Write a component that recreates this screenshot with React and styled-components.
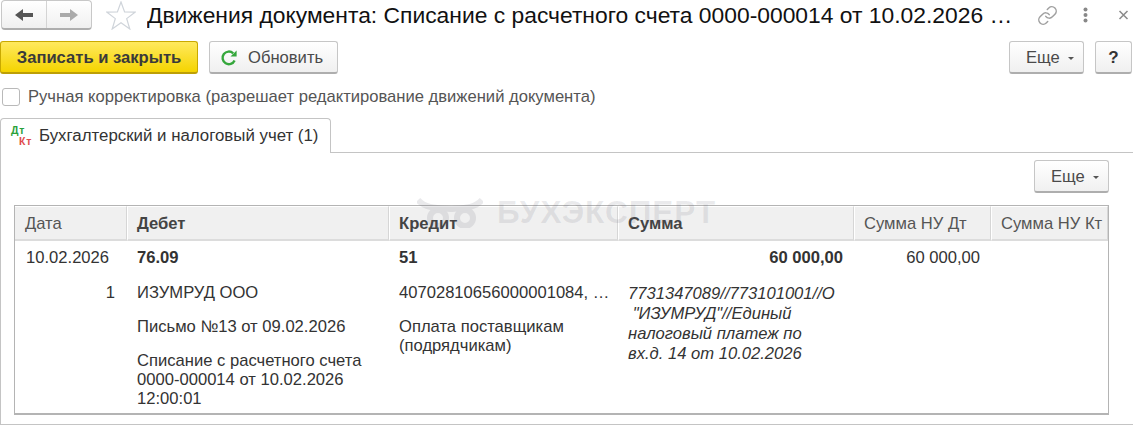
import React from "react";
import styled, { createGlobalStyle } from "styled-components";

const GlobalStyle = createGlobalStyle`
  html, body {
    margin: 0;
    padding: 0;
    background: #fff;
    overflow: hidden;
  }
  body {
    font-family: "Liberation Sans", Arial, sans-serif;
    font-size: 16.6px;
    color: #333;
  }
`;

const Page = styled.div`
  width: 1133px;
  height: 425px;
  position: relative;
  overflow: hidden;
`;

const Header = styled.div`
  display: flex;
  align-items: center;
  height: 30px;
  padding-left: 1px;
`;

const NavGroup = styled.div`
  display: flex;
  width: 91px;
  height: 30px;
  box-sizing: border-box;
  border: 1px solid #c8c8c8;
  border-bottom: 2px solid #aeaeae;
  border-radius: 4px;
  background: linear-gradient(#fff, #f0f0f0);
`;

const NavButton = styled.div`
  flex: 1;
  display: flex;
  align-items: center;
  justify-content: center;
  & + & {
    border-left: 1px solid #d4d4d4;
  }
`;

const StarWrap = styled.div`
  display: flex;
  margin-left: 14px;
`;

const Title = styled.div`
  flex: 1;
  margin-left: 11px;
  font-size: 22.85px;
  color: #111;
  white-space: nowrap;
  overflow: hidden;
`;

const HeaderIcons = styled.div`
  display: flex;
  align-items: center;
  gap: 25px;
  margin-right: 4px;
`;

const Toolbar = styled.div`
  display: flex;
  gap: 11px;
  margin-top: 11px;
`;

const Button = styled.div`
  display: flex;
  align-items: center;
  justify-content: center;
  gap: 8px;
  box-sizing: border-box;
  width: ${(p) => p.$width}px;
  height: 33px;
  padding-top: 2px;
  border-radius: 3px;
  color: #4a4a4a;
  border: 1px solid #c6c6c6;
  border-bottom: 2px solid #aeaeae;
  background: linear-gradient(#fff, #f0f0f0);
`;

const PrimaryButton = styled(Button)`
  font-weight: bold;
  color: #3a3a3a;
  border: 1px solid #c9a900;
  border-bottom: 2px solid #bd9f06;
  background: linear-gradient(#ffe95e, #f5d400);
`;

const RefreshButton = styled(Button)`
  justify-content: flex-start;
  gap: 10px;
  padding-left: 10px;
`;

const MenuButton = styled(Button)`
  justify-content: flex-start;
  padding-left: 16px;
`;

const HelpButton = styled(Button)`
  font-size: 17px;
  font-weight: bold;
  color: #333;
`;

const Spacer = styled.div`
  flex: 1;
`;

const ToolbarEnd = styled.div`
  display: flex;
  gap: 11px;
  margin-right: 1px;
`;

const Caret = styled.span`
  width: 0;
  height: 0;
  border-left: 3px solid transparent;
  border-right: 3px solid transparent;
  border-top: 3px solid #555;
`;

const CheckRow = styled.div`
  display: flex;
  align-items: center;
  gap: 8px;
  margin-top: 14px;
  padding-left: 2px;
  height: 18px;
  color: #555;
`;

const CheckBox = styled.span`
  box-sizing: border-box;
  width: 18px;
  height: 18px;
  background: #fff;
  border: 1px solid #b9b9b9;
  border-radius: 3px;
`;

const Tabs = styled.div`
  display: flex;
  margin-top: 12px;
  height: 34px;
`;

const Tab = styled.div`
  display: flex;
  align-items: center;
  gap: 7px;
  box-sizing: border-box;
  width: 331px;
  height: 35px;
  padding-left: 10px;
  font-size: 16.85px;
  background: #fff;
  border: 1px solid #c4c4c4;
  border-bottom: none;
  border-radius: 4px 4px 0 0;
  position: relative;
  z-index: 1;
  color: #333;
`;

const DtKt = styled.span`
  display: flex;
  flex-direction: column;
  width: 21px;
  font-size: 10.5px;
  font-weight: bold;
  letter-spacing: 0.7px;
  line-height: 11px;
  color: #2aa13a;
`;

const Kt = styled.span`
  align-self: flex-end;
  color: #e04b4b;
`;

const Panel = styled.div`
  box-sizing: border-box;
  width: 1140px;
  height: 273px;
  padding: 7px 30px 0 13px;
  border: 1px solid #c4c4c4;
`;

const PanelBar = styled.div`
  display: flex;
  justify-content: flex-end;
  height: 33px;
`;

const Table = styled.div`
  display: grid;
  grid-template-columns: 112px 262px 229px 236px 137px 1fr;
  grid-template-rows: 35px 1fr;
  box-sizing: border-box;
  height: 210px;
  margin-top: 12px;
  border: 1px solid #b4b4b4;
  border-bottom-width: 2px;
  overflow: hidden;
`;

const HeadCell = styled.div`
  box-sizing: border-box;
  height: 35px;
  padding: 7px 0 0 ${(p) => (p.$first ? 10 : 9)}px;
  background: #f0f0f0;
  border-left: ${(p) => (p.$first ? "none" : "1px solid #fff")};
  border-right: 1px solid #d6d6d6;
  border-top: 1px solid #fff;
  border-bottom: 2px solid #dcdcdc;
  font-weight: ${(p) => (p.$bold ? "bold" : "normal")};
  color: ${(p) => (p.$bold ? "#444" : "#555")};
  white-space: nowrap;
  overflow: hidden;
`;

const Cell = styled.div`
  padding: 7px 11px 0 10px;
  line-height: 19px;
  color: #333;
`;

const DateCell = styled(Cell)`
  padding: 7px 12px 0 11px;
`;

const Line = styled.div`
  min-height: 19px;
  font-weight: ${(p) => (p.$bold ? "bold" : "normal")};
  text-align: ${(p) => (p.$right ? "right" : "left")};
  margin-top: ${(p) => p.$top || 0}px;
  white-space: ${(p) => (p.$nowrap ? "nowrap" : "normal")};
`;

const Comment = styled.div`
  font-style: italic;
  line-height: 20px;
  margin-top: 17px;
  white-space: pre-wrap;
  color: #333;
`;

const Watermark = styled.div`
  position: absolute;
  left: 417px;
  top: 194px;
  display: flex;
  align-items: center;
  gap: 14px;
  font-size: 31.5px;
  font-weight: bold;
  letter-spacing: 1px;
  color: rgba(90, 90, 110, 0.13);
  pointer-events: none;
`;

const ArrowIcon = ({ color, flip }) => (
  <svg width="18" height="12" viewBox="0 0 18 12" style={flip ? { transform: "scaleX(-1)" } : undefined}>
    <path d="M0 6 L8 0 V4 H18 V8 H8 V12 Z" fill={color} />
  </svg>
);

const StarIcon = () => (
  <svg width="30" height="29" viewBox="0 0 30 29">
    <path
      d="M15 1 L18.6 11 L29 11.2 L20.7 17.6 L23.8 28 L15 21.8 L6.2 28 L9.3 17.6 L1 11.2 L11.4 11 Z"
      fill="#fff"
      stroke="#cfd4da"
      strokeWidth="1.2"
    />
  </svg>
);

const LinkIcon = () => (
  <svg width="21" height="21" viewBox="0 0 24 24" fill="none" stroke="#a0a0a0" strokeWidth="1.7" strokeLinecap="round">
    <path d="M10 13a5 5 0 0 0 7.54.54l3-3a5 5 0 0 0-7.07-7.07l-1.72 1.71" />
    <path d="M14 11a5 5 0 0 0-7.54-.54l-3 3a5 5 0 0 0 7.07 7.07l1.71-1.71" />
  </svg>
);

const DotsIcon = () => (
  <svg width="5" height="16" viewBox="0 0 5 16">
    <circle cx="2.5" cy="2.5" r="2" fill="#888" />
    <circle cx="2.5" cy="8" r="2" fill="#888" />
    <circle cx="2.5" cy="13.5" r="2" fill="#888" />
  </svg>
);

const CloseIcon = () => (
  <svg width="16" height="10" viewBox="0 0 16 10" stroke="#8a8a8a" strokeWidth="1.5">
    <path d="M6.5 1 L14.5 9 M14.5 1 L6.5 9" />
  </svg>
);

const RefreshIcon = () => (
  <svg width="18" height="18" viewBox="0 0 18 18" fill="none">
    <path d="M14.6 11.5A6.3 6.3 0 1 1 13.2 4.3" stroke="#35a73c" strokeWidth="2.4" />
    <path d="M10.5 7.5 H16.6 V1.4 Z" fill="#35a73c" />
  </svg>
);

const LogoIcon = () => (
  <svg width="66" height="30" viewBox="0 0 66 30" fill="none" stroke="#5a5a6e" strokeWidth="6" opacity="0.13">
    <circle cx="21" cy="20" r="8" />
    <circle cx="48" cy="20" r="8" />
    <path d="M1 2 C8 10 18 10 34 11 C48 10 58 10 65 2" />
  </svg>
);

const MoreButton = () => (
  <MenuButton $width={75}>
    Еще <Caret />
  </MenuButton>
);

const columns = [
  { title: "Дата" },
  { title: "Дебет", bold: true },
  { title: "Кредит", bold: true },
  { title: "Сумма", bold: true },
  { title: "Сумма НУ Дт" },
  { title: "Сумма НУ Кт" },
];

export default function App() {
  return (
    <Page>
      <GlobalStyle />
      <Header>
        <NavGroup>
          <NavButton>
            <ArrowIcon color="#555" />
          </NavButton>
          <NavButton>
            <ArrowIcon color="#aaa" flip />
          </NavButton>
        </NavGroup>
        <StarWrap>
          <StarIcon />
        </StarWrap>
        <Title>Движения документа: Списание с расчетного счета 0000-000014 от 10.02.2026 …</Title>
        <HeaderIcons>
          <LinkIcon />
          <DotsIcon />
          <CloseIcon />
        </HeaderIcons>
      </Header>

      <Toolbar>
        <PrimaryButton $width={198}>Записать и закрыть</PrimaryButton>
        <RefreshButton $width={129}>
          <RefreshIcon />
          Обновить
        </RefreshButton>
        <Spacer />
        <ToolbarEnd>
          <MoreButton />
          <HelpButton $width={37}>?</HelpButton>
        </ToolbarEnd>
      </Toolbar>

      <CheckRow>
        <CheckBox />
        Ручная корректировка (разрешает редактирование движений документа)
      </CheckRow>

      <Tabs>
        <Tab>
          <DtKt>
            <span>Дт</span>
            <Kt>Кт</Kt>
          </DtKt>
          Бухгалтерский и налоговый учет (1)
        </Tab>
      </Tabs>

      <Panel>
        <PanelBar>
          <MoreButton />
        </PanelBar>
        <Table>
          {columns.map((c, i) => (
            <HeadCell key={c.title} $bold={c.bold} $first={i === 0}>
              {c.title}
            </HeadCell>
          ))}
          <DateCell>
            <Line>10.02.2026</Line>
            <Line $right $top={16}>1</Line>
          </DateCell>
          <Cell>
            <Line $bold>76.09</Line>
            <Line $top={16}>ИЗУМРУД ООО</Line>
            <Line $top={15}>Письмо №13 от 09.02.2026</Line>
            <Line $top={15}>Списание с расчетного счета 0000-000014 от 10.02.2026 12:00:01</Line>
          </Cell>
          <Cell>
            <Line $bold>51</Line>
            <Line $top={16} $nowrap>40702810656000001084, …</Line>
            <Line $top={15}>Оплата поставщикам (подрядчикам)</Line>
          </Cell>
          <Cell>
            <Line $bold $right>60 000,00</Line>
            <Comment>{'7731347089//773101001//О\n "ИЗУМРУД"//Единый\nналоговый платеж по\nвх.д. 14 от 10.02.2026'}</Comment>
          </Cell>
          <Cell>
            <Line $right>60 000,00</Line>
          </Cell>
          <Cell />
        </Table>
      </Panel>

      <Watermark>
        <LogoIcon />
        БУХЭКСПЕРТ
      </Watermark>
    </Page>
  );
}
